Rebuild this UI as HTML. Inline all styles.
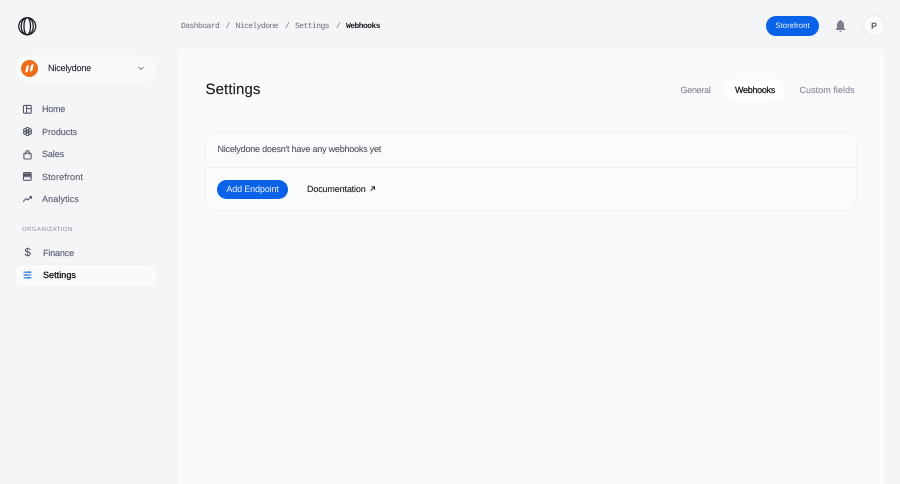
<!DOCTYPE html>
<html><head><meta charset="utf-8">
<style>
*{box-sizing:border-box;margin:0;padding:0}
html,body{width:900px;height:484px;overflow:hidden;background:#f4f5f7;font-family:"Liberation Sans",sans-serif;text-rendering:geometricPrecision}
.a{position:absolute;white-space:nowrap;line-height:14px}
svg{position:absolute;overflow:visible}
.nav{font-size:9px;color:#5f6275;-webkit-text-stroke:.15px #5f6275}
.mono{font-family:"Liberation Mono",monospace;font-size:8px;letter-spacing:-.55px;color:#6b6d7c;top:20px}
.ic{fill:none;stroke:#55586a;stroke-width:1.2;stroke-linecap:round;stroke-linejoin:round}
</style></head><body>
<svg style="left:18px;top:17px" width="18.500" height="18.500" viewBox="0 0 19 19" fill="none" stroke="#1c1c22" stroke-width="1.300"><circle cx="9.500" cy="9.500" r="8.700"/><ellipse cx="9.500" cy="9.500" rx="6.200" ry="8.700"/><ellipse cx="9.500" cy="9.500" rx="3.400" ry="8.700"/></svg>

<div class="a" style="left:15px;top:55px;width:141px;height:28px;border-radius:14px;background:#f9fafa;box-shadow:0 0 2px rgba(0,0,0,.02)"></div>
<svg style="left:21px;top:60px" width="17" height="17" viewBox="0 0 17 17"><circle cx="8.500" cy="8.500" r="8.500" fill="#ef6c1b"/><path d="M4.300 12.600 5.300 6.800Q5.600 5.500 8 5.300L7 10.800Q6.700 12.400 4.300 12.600ZM8.800 11.600 9.800 5.800Q10.100 4.500 12.700 4.300L11.600 9.800Q11.200 11.400 8.800 11.600Z" fill="#fff"/></svg>
<div class="a" style="left:48px;top:61px;font-size:9px;letter-spacing:-.15px;color:#2a2b35;-webkit-text-stroke:.15px #2a2b35">Nicelydone</div>
<svg style="left:138px;top:66px" width="6" height="5" viewBox="0 0 6 5"><path d="M.5 1 3 3.500 5.500 1" fill="none" stroke="#6b6d7c" stroke-width=".8"/></svg>

<svg class="ic" style="left:23px;top:104.700px" width="9" height="9" viewBox="0 0 10 10"><rect x=".5" y=".5" width="8.600" height="8.600" rx="1"/><path d="M4 .5V9M4 4H9"/></svg>
<div class="a nav" style="left:42px;top:102px;letter-spacing:-.25px">Home</div>
<svg class="ic" style="left:23px;top:127px" width="9" height="9" viewBox="0 0 10 10"><circle cx="5" cy="5" r="1.400"/><circle cx="5" cy="2.200" r="1.800"/><circle cx="5" cy="7.800" r="1.800"/><circle cx="2.400" cy="3.600" r="1.800"/><circle cx="7.600" cy="3.600" r="1.800"/><circle cx="2.400" cy="6.400" r="1.800"/><circle cx="7.600" cy="6.400" r="1.800"/></svg>
<div class="a nav" style="left:42px;top:124.500px;letter-spacing:-.05px">Products</div>
<svg class="ic" style="left:23px;top:149.500px" width="9" height="9.900" viewBox="0 0 10 11"><path d="M1.500 3.500H8.500Q9 3.500 9 4V9.200Q9 10 8.200 10H1.800Q1 10 1 9.200V4Q1 3.500 1.500 3.500ZM3.200 4.800V2.400Q3.200 .8 5 .8T6.800 2.400V4.800"/></svg>
<div class="a nav" style="left:42px;top:147px;letter-spacing:-.1px">Sales</div>
<svg class="ic" style="left:23px;top:172.300px" width="9" height="9" viewBox="0 0 10 10"><rect x=".5" y=".6" width="8.600" height="8.600" rx="1.200"/><path d="M.5 5.300H9.100"/><path d="M1 1.500H8.600V4.500H1Z" fill="#55586a" stroke="none"/></svg>
<div class="a nav" style="left:42px;top:169.500px;letter-spacing:.15px">Storefront</div>
<svg class="ic" style="left:23px;top:196.300px" width="9" height="6.300" viewBox="0 0 10 7"><path d="M.4 6 3.500 2.800 5.500 4.300 9.400 .8M7.300 .7H9.400V2.600"/></svg>
<div class="a nav" style="left:42px;top:192px;letter-spacing:.1px">Analytics</div>

<div class="a" style="left:22px;top:222.500px;font-size:6px;letter-spacing:.45px;color:#8a8c99">ORGANIZATION</div>
<div class="a" style="left:24.500px;top:246px;font-size:11.500px;color:#3d3f4d">$</div>
<div class="a nav" style="left:43px;top:245.500px;letter-spacing:-.15px">Finance</div>
<div class="a" style="left:15px;top:265px;width:142px;height:21px;border-radius:7px;background:#f9fafa;box-shadow:0 0 2px rgba(0,0,0,.04)"></div>
<svg style="left:23.300px;top:271px" width="9" height="8" viewBox="0 0 10 10" fill="none" stroke="#1f6fe0" stroke-width="1.300"><path d="M0 1.500H10M0 5H10M0 8.500H10"/><path d="M6.500 .2V2.800M3 3.700V6.300M6.500 7.200V9.800"/></svg>
<div class="a nav" style="left:43px;top:268px;letter-spacing:.05px;color:#15161c;-webkit-text-stroke:.3px #15161c">Settings</div>

<div class="a mono" style="left:181px">Dashboard</div>
<div class="a mono" style="left:225.500px">/</div>
<div class="a mono" style="left:235.500px">Nicelydone</div>
<div class="a mono" style="left:285px">/</div>
<div class="a mono" style="left:295px">Settings</div>
<div class="a mono" style="left:336px">/</div>
<div class="a mono" style="left:346px;color:#1c1c22;font-weight:bold">Webhooks</div>

<div class="a" style="left:766px;top:16px;width:53px;height:20px;border-radius:10px;background:#0a62e8;color:#e8f0ff;font-size:7.800px;line-height:20px;text-align:center">Storefront</div>
<svg style="left:835px;top:20px" width="11" height="12" viewBox="0 0 11 12"><path d="M5.500 0Q6.500 0 6.500 1Q9 1.800 9 5V8L10.500 9.500V10H.5V9.500L2 8V5Q2 1.800 4.500 1Q4.500 0 5.500 0ZM4.200 10.700H6.800Q6.500 12 5.500 12T4.200 10.700Z" fill="#7c7e8b"/></svg>
<div class="a" style="left:864px;top:16px;width:20px;height:20px;border-radius:50%;background:#f9fafa;box-shadow:0 0 3px rgba(0,0,0,.08);color:#22232c;font-size:9px;line-height:20px;text-align:center">P</div>

<div class="a" style="left:177px;top:48px;width:708px;height:436px;border-radius:8px 8px 0 0;background:#f9fafa;box-shadow:0 0 2px rgba(0,0,0,.03)"></div>
<div class="a" style="left:205.500px;top:81px;font-size:15px;line-height:18px;color:#1a1b22;letter-spacing:.1px;-webkit-text-stroke:.15px #1a1b22">Settings</div>
<div class="a" style="left:680.500px;top:82.500px;font-size:9px;letter-spacing:-.28px;color:#858796;-webkit-text-stroke:.1px #858796">General</div>
<div class="a" style="left:725px;top:79px;width:59px;height:21px;border-radius:10.500px;background:#fff"></div>
<div class="a" style="left:735px;top:82.500px;font-size:9px;letter-spacing:-.3px;color:#17181f;-webkit-text-stroke:.25px #17181f">Webhooks</div>
<div class="a" style="left:799.500px;top:82.500px;font-size:9px;letter-spacing:.05px;color:#858796;-webkit-text-stroke:.1px #858796">Custom fields</div>

<div class="a" style="left:205px;top:131px;width:652px;height:80px;border-radius:11px;border:1px solid #f1f2f3;background:#fafbfb"></div>
<div class="a" style="left:206px;top:167px;width:650px;height:1px;background:#f1f2f3"></div>
<div class="a" style="left:217.500px;top:142px;font-size:9px;letter-spacing:-.22px;color:#50525f;-webkit-text-stroke:.1px #50525f">Nicelydone doesn't have any webhooks yet</div>
<div class="a" style="left:217px;top:180px;width:71px;height:19px;border-radius:9.500px;background:#0a62e8;color:#e8f0ff;font-size:9px;letter-spacing:-.15px;line-height:19px;text-align:center">Add Endpoint</div>
<div class="a" style="left:307px;top:182px;font-size:9px;letter-spacing:-.15px;color:#1a1b22;-webkit-text-stroke:.1px #1a1b22">Documentation</div>
<svg style="left:370.300px;top:186px" width="5.500" height="5.500" viewBox="0 0 7 7" fill="none" stroke="#1a1b22" stroke-width="1.200"><path d="M.8 6 5.800 1M1.800 1H5.800V5"/></svg>
</body></html>
